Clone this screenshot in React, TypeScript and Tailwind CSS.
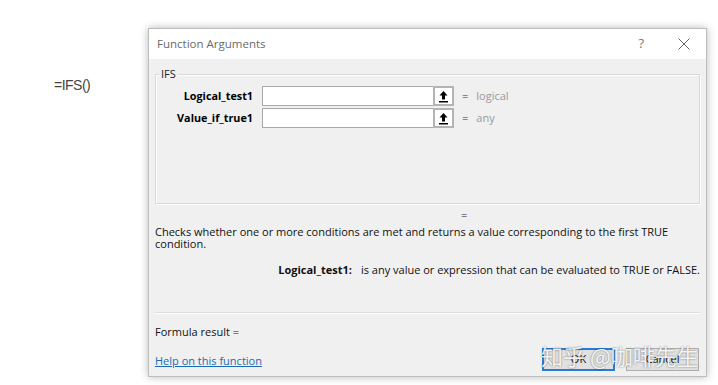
import React from "react";

const ui = { fontFamily: '"Open Sans", "Noto Sans", Arial, sans-serif' };

function UpButton() {
  return (
    <div className="flex h-[20px] w-[21px] items-center justify-center border-2 border-[#b4b4b4] bg-white">
      <svg width="11" height="13" viewBox="0 0 11 13">
        <path d="M5.5 1 L1.5 5.5 L4 5.5 L4 9.5 L7 9.5 L7 5.5 L9.5 5.5 Z" fill="#000" />
        <rect x="1" y="11" width="9" height="1.5" fill="#000" />
      </svg>
    </div>
  );
}

function ArgRow({ label, hint }: { label: string; hint: string }) {
  return (
    <div className="flex h-[20px] items-center">
      <div className="w-[97px] text-right text-[10.8px] font-bold text-black">{label}</div>
      <div className="ml-[9px] flex h-[20px] w-[192px] items-stretch border border-[#a9a9a9] bg-white">
        <div className="flex-1" />
        <div className="-my-px -mr-px">
          <UpButton />
        </div>
      </div>
      <div className="ml-[8px] text-[11px] text-[#333]">=</div>
      <div className="ml-[8px] text-[11px] text-[#9a9a9a]">{hint}</div>
    </div>
  );
}

export default function App() {
  return (
    <div className="h-[385px] w-[718px] overflow-hidden bg-white" style={ui}>
      <div className="flex items-start">
        <div className="ml-[54px] mt-[75px] w-[40px] text-[14px] tracking-[-0.5px] text-[#444]" style={{ fontFamily: '"Liberation Sans Narrow", "Liberation Sans", Arial, sans-serif' }}>
          =IFS()
        </div>
        <div className="relative ml-[54px] mt-[28px] flex h-[349px] w-[559px] flex-col border border-[#bdbdbd] bg-[#f0f0f0] shadow-[0_0_8px_rgba(0,0,0,0.28)]">
          {/* title bar */}
          <div className="flex h-[30px] shrink-0 items-center bg-white pl-[8px] pr-[16px]">
            <div className="flex-1 text-[11.5px] text-[#6a6a6a]">Function Arguments</div>
            <div className="mr-[34px] text-[13px] text-[#777]">?</div>
            <svg width="12" height="12" viewBox="0 0 12 12">
              <path d="M0.5 0.5 L11.5 11.5 M11.5 0.5 L0.5 11.5" stroke="#666" strokeWidth="1" />
            </svg>
          </div>
          {/* body */}
          <div className="flex flex-1 flex-col px-[6px]">
            <div className="relative mt-[15px] h-[130px] border border-[#d9d9d9] shadow-[inset_1px_1px_0_#ffffff,1px_1px_0_#ffffff]">
              <div className="absolute -top-[8px] left-[3px] bg-[#f0f0f0] px-[2px] text-[11px] leading-[14px] text-[#222]">IFS</div>
              <div className="mt-[11px] flex flex-col gap-[2px]">
                <ArgRow label="Logical_test1" hint="logical" />
                <ArgRow label="Value_if_true1" hint="any" />
              </div>
            </div>
            <div className="mt-[4px] h-[14px] pl-[306px] text-[11px] leading-[14px] text-[#222]">=</div>
            <div className="mt-[4px] text-[11px] leading-[12px] text-[#111]">
              Checks whether one or more conditions are met and returns a value corresponding to the first TRUE
              <br />
              condition.
            </div>
            <div className="mt-[13px] flex justify-end text-[11px] leading-[14px] text-[#111]">
              <span className="font-bold">Logical_test1:</span>
              <span className="ml-[9px]">is any value or expression that can be evaluated to TRUE or FALSE.</span>
            </div>
            <div className="mt-[35px] border-t border-[#dcdcdc] shadow-[0_1px_0_#ffffff]" />
            <div className="mt-[12px] text-[11px] leading-[14px] text-[#111]">Formula result =</div>
            <div className="mt-[9px] flex items-center">
              <a className="flex-1 pt-[3px] text-[11px] leading-[14px] text-[#1a6bb5] underline">Help on this function</a>
              <button className="h-[23px] w-[73px] border-2 border-[#2a7bd4] bg-[#e1e1e1] text-[11px] text-[#111]">OK</button>
              <button className="ml-[11px] mr-[1px] h-[23px] w-[73px] border border-[#adadad] bg-[#e1e1e1] text-[11px] text-[#111]">Cancel</button>
            </div>
          </div>
          <div
            className="absolute left-[392px] top-[313px] text-[22px] leading-[26px] text-white/90"
            style={{ fontFamily: '"Noto Sans CJK SC", sans-serif', textShadow: "0 0 2px rgba(0,0,0,0.55)" }}
          >
            知乎 @咖啡先生
          </div>
        </div>
      </div>
    </div>
  );
}
